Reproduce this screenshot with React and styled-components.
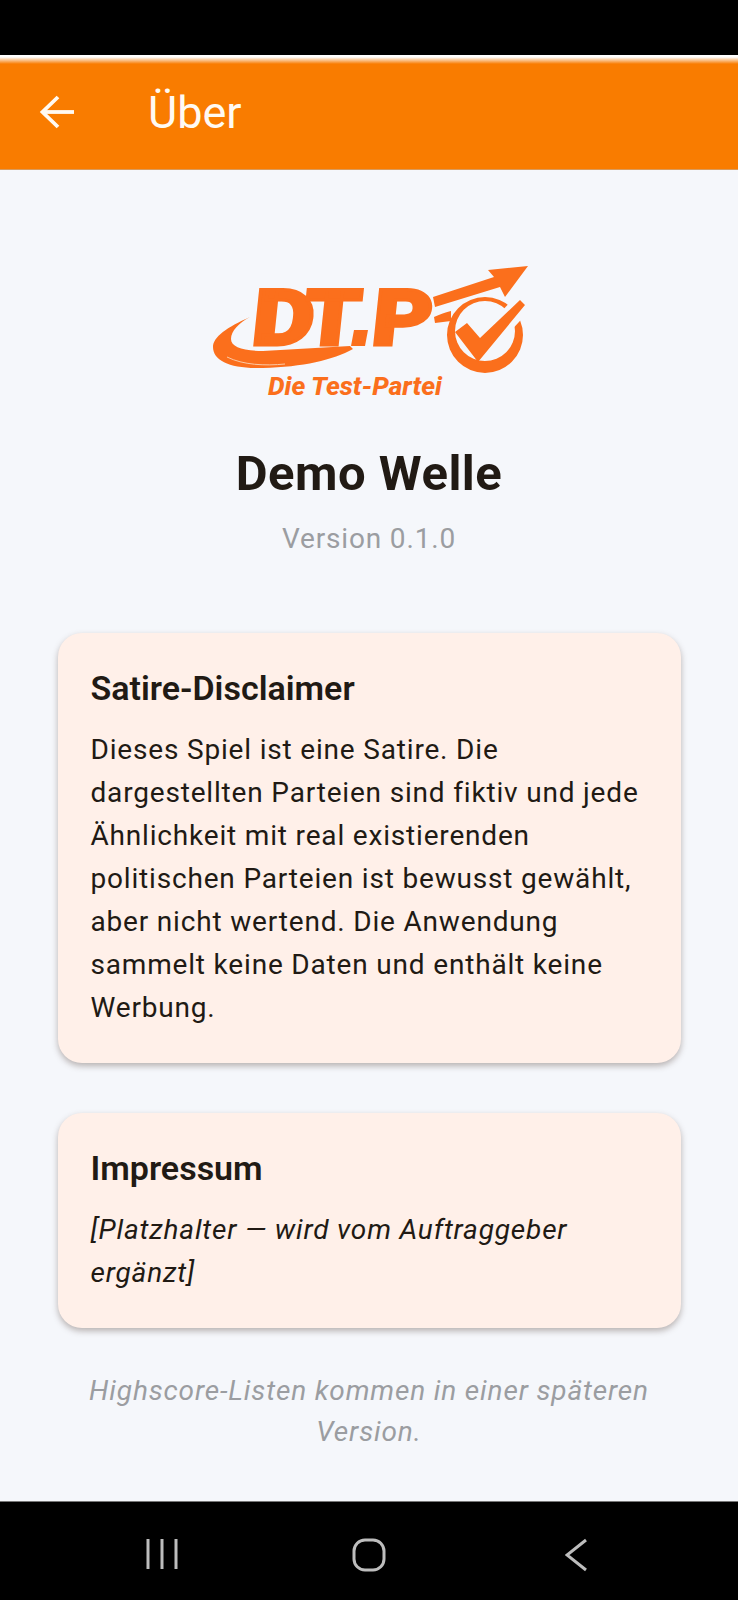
import React from 'react'
import styled, { createGlobalStyle } from 'styled-components'

const Global = createGlobalStyle`
  html, body { margin: 0; padding: 0; background: #000; }
  * { box-sizing: border-box; }
`

const Screen = styled.div`
  width: 738px;
  height: 1600px;
  display: flex;
  flex-direction: column;
  overflow: hidden;
  background: #f5f7fb;
  font-family: Roboto, "Noto Sans", sans-serif;
  color: #211a14;
`

const StatusBar = styled.div`
  height: 55px;
  flex: none;
  background: #000;
`

const AppBar = styled.header`
  height: 115px;
  flex: none;
  display: flex;
  align-items: center;
  padding: 0 0 0 39px;
  gap: 73px;
  background: linear-gradient(#ffffff 0, #ffffff 2px, #fbd9b8 4px, #f97c00 9px, #f97c00 100%);
  border-bottom: 1px solid #d99a5c;
`

const Title = styled.h1`
  margin: 0;
  font-size: 45px;
  font-weight: 400;
  color: #fffaf3;
`

const Main = styled.main`
  flex: 1;
  display: flex;
  flex-direction: column;
  align-items: center;
  padding: 95px 57.5px 0;
`

const Heading = styled.h2`
  margin: 43px 0 0;
  font-size: 49px;
  line-height: 60px;
  font-weight: 700;
  letter-spacing: 0.5px;
`

const Version = styled.div`
  margin-top: 17px;
  font-size: 28px;
  line-height: 36px;
  letter-spacing: 0.85px;
  color: #9b9da1;
`

const Card = styled.section`
  width: 100%;
  margin-top: ${({ $top }) => $top}px;
  padding: 34px 33px 34px;
  border-radius: 24px;
  background: #fff0e9;
  box-shadow: 0 3px 6px rgba(70, 50, 40, 0.35);
`

const CardTitle = styled.h3`
  margin: 0 0 18px;
  font-size: 34px;
  line-height: 43px;
  font-weight: 600;
`

const CardText = styled.p`
  margin: 0;
  font-size: 28px;
  line-height: 43px;
  letter-spacing: 0.82px;
  font-style: ${({ $italic }) => ($italic ? 'italic' : 'normal')};
`

const Footnote = styled.p`
  margin: 42px 0 0;
  text-align: center;
  font-size: 28px;
  line-height: 41px;
  letter-spacing: 0.85px;
  font-style: italic;
  color: #9b9da1;
`

const NavBar = styled.nav`
  height: 99px;
  flex: none;
  display: flex;
  align-items: flex-start;
  padding: 36px 0 0 146px;
  background: #000;
  border-top: 1px solid #777;
`

const NavItem = styled.span`
  display: block;
  line-height: 0;
  margin-left: ${({ $left }) => $left || 0}px;
`

const LogoText = styled.text`
  font-family: Roboto, sans-serif;
  font-weight: 900;
  font-size: 78px;
  stroke: #fb6f1c;
  stroke-width: 3px;
`

const LogoSub = styled.text`
  font-family: Roboto, sans-serif;
  font-weight: 800;
  font-style: italic;
  font-size: 26px;
`

const BackArrow = () => (
  <svg width="36" height="36" viewBox="0 0 36 36" fill="none" stroke="#fffaf3" strokeWidth="3.8">
    <path d="M35 18H4" />
    <path d="M19 3L3.5 18L19 33" />
  </svg>
)

const Logo = () => (
  <svg width="320" height="136" viewBox="-4 0 320 136" style={{ display: 'block' }}>
    <g fill="#fb6f1c">
      {/* swoosh under the D */}
      <path d="M37 52C14 62 0 72 0 82C0 96 18 104 50 103C90 102 120 95 140 84L137 81L50 86C30 86 18 82 18 74C18 66 26 58 37 52Z" />
      <path d="M14 92C30 100 52 101 72 99" fill="none" stroke="#fbc9a4" strokeWidth="1" />
      <g transform="translate(8.4 0) skewX(-6)">
        <LogoText x="37" y="80" textLength="62" lengthAdjust="spacingAndGlyphs">D</LogoText>
        <LogoText x="88" y="80" textLength="57" lengthAdjust="spacingAndGlyphs">T</LogoText>
        <LogoText x="157" y="80" textLength="60" lengthAdjust="spacingAndGlyphs">P</LogoText>
      </g>
      <path d="M141 65H155L152 81H138Z" />
      {/* ring, opened on the upper right where the tick passes */}
      <path
        fillRule="evenodd"
        d="M234 70A38 38 0 1 1 310 70A38 38 0 1 1 234 70ZM242 66A30 30 0 1 0 302 66A30 30 0 1 0 242 66Z"
      />
      <path d="M221 52C226 50 230 48 238 46L238 56L222 58Z" />
      <path d="M268 83L311 37" fill="none" stroke="#f5f7fb" strokeWidth="20" />
      <path d="M242 67L254 58L267 73L307 35L312 40L265 97Z" />
      {/* arrow */}
      <path d="M220 32L281 12L275 5L315 1L292 32L287 22L222 42Z" />
      <LogoSub x="55" y="130" textLength="174" lengthAdjust="spacingAndGlyphs">Die Test-Partei</LogoSub>
    </g>
  </svg>
)

const RecentsIcon = () => (
  <svg width="32" height="32" viewBox="0 0 32 32" fill="none" stroke="#bdbdbd" strokeWidth="3">
    <path d="M2 1V31M16 1V31M30 1V31" />
  </svg>
)

const HomeIcon = () => (
  <svg width="34" height="34" viewBox="0 0 34 34" fill="none" stroke="#bdbdbd" strokeWidth="3">
    <rect x="2" y="2" width="30" height="30" rx="11" />
  </svg>
)

const NavBackIcon = () => (
  <svg width="22" height="34" viewBox="0 0 22 34" fill="none" stroke="#bdbdbd" strokeWidth="3">
    <path d="M21 2L2 17L21 32" />
  </svg>
)

export default function App() {
  return (
    <Screen>
      <Global />
      <StatusBar />
      <AppBar>
        <BackArrow />
        <Title>Über</Title>
      </AppBar>
      <Main>
        <Logo />
        <Heading>Demo Welle</Heading>
        <Version>Version 0.1.0</Version>
        <Card $top={76}>
          <CardTitle>Satire-Disclaimer</CardTitle>
          <CardText>
            Dieses Spiel ist eine Satire. Die dargestellten Parteien sind fiktiv und jede
            Ähnlichkeit mit real existierenden politischen Parteien ist bewusst gewählt,
            aber nicht wertend. Die Anwendung sammelt keine Daten und enthält keine Werbung.
          </CardText>
        </Card>
        <Card $top={50}>
          <CardTitle>Impressum</CardTitle>
          <CardText $italic>[Platzhalter — wird vom Auftraggeber ergänzt]</CardText>
        </Card>
        <Footnote>Highscore-Listen kommen in einer späteren Version.</Footnote>
      </Main>
      <NavBar>
        <NavItem><RecentsIcon /></NavItem>
        <NavItem $left={173.5}><HomeIcon /></NavItem>
        <NavItem $left={179}><NavBackIcon /></NavItem>
      </NavBar>
    </Screen>
  )
}
